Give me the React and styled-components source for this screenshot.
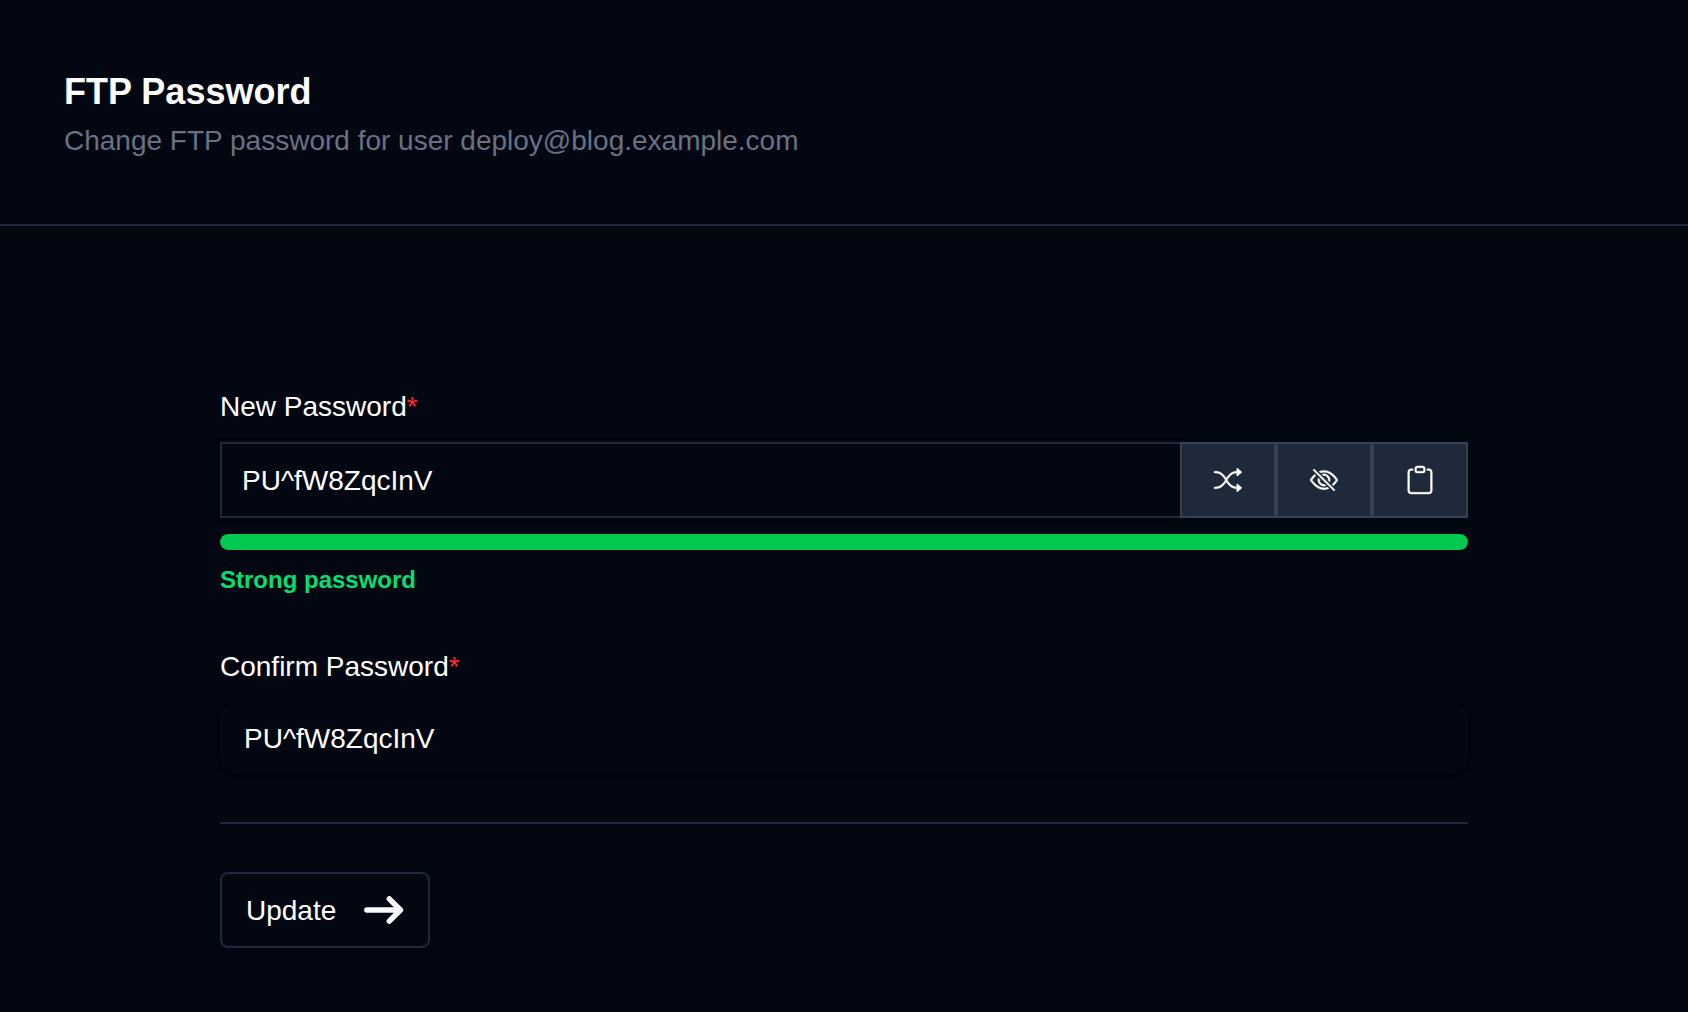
import { useState } from 'react';
import styled, { createGlobalStyle } from 'styled-components';
import { BsShuffle, BsEye, BsEyeSlash, BsClipboard } from 'react-icons/bs';

const GlobalStyle = createGlobalStyle`
  * {
    box-sizing: border-box;
  }

  body {
    margin: 0;
    background-color: #030712;
    color: #fff;
    font-family: 'Liberation Sans', Arial, sans-serif;
    font-size: 28px;
    line-height: 42px;
  }
`;

const StyledHeader = styled.header`
  padding: 64px 64px 62px;
  border-bottom: 2px solid #1e2939;

  h1 {
    margin: 0;
    font-size: 36px;
    line-height: 56px;
    font-weight: 700;
  }

  p {
    margin: 0;
    color: #6a7282;
  }
`;

const StyledForm = styled.form`
  max-width: 1376px;
  margin: 0 auto;
  padding: 160px 64px 64px;
`;

const Field = styled.div`
  display: flex;
  flex-direction: column;
  margin-bottom: 48px;
`;

const Label = styled.label`
  margin-bottom: 14px;

  span {
    color: #fb2c36;
  }
`;

const InputGroup = styled.div`
  display: flex;
`;

const Input = styled.input`
  flex: 1;
  min-width: 0;
  height: ${({ $grouped }) => ($grouped ? '76px' : '72px')};
  padding: ${({ $grouped }) => ($grouped ? '2px 20px 0' : '2px 24px 0')};
  border: ${({ $grouped }) => ($grouped ? '2px solid #1e2939' : '0')};
  border-right: 0;
  border-radius: ${({ $grouped }) => ($grouped ? '0' : '16px')};
  background-color: #030712;
  box-shadow: 0 2px 6px rgba(0, 0, 0, 0.4), 0 2px 4px rgba(0, 0, 0, 0.4);
  color: #fff;
  font-family: inherit;
  font-size: 28px;
  outline: none;
`;

const IconButton = styled.button`
  display: flex;
  align-items: center;
  justify-content: center;
  width: 96px;
  height: 76px;
  padding: 0;
  border: 2px solid #364153;
  background-color: #1e2939;
  color: #fff;
  font-size: 28px;
  cursor: pointer;

  svg {
    stroke: currentColor;
    stroke-width: 0.25;
    overflow: visible;
  }
`;

const StrengthBar = styled.div`
  height: 16px;
  margin-top: 16px;
  border-radius: 8px;
  background-color: #1e2939;
  overflow: hidden;

  div {
    height: 100%;
    border-radius: 8px;
    background-color: #00c951;
  }
`;

const StrengthText = styled.p`
  margin: 12px 0 0;
  color: #05df72;
  font-size: 24px;
  line-height: 36px;
  font-weight: 700;
`;

const Divider = styled.hr`
  margin: 0 0 48px;
  border: 0;
  border-top: 2px solid #1e2939;
`;

const SubmitButton = styled.button`
  display: inline-flex;
  align-items: center;
  gap: 28px;
  height: 76px;
  padding: 0 24px;
  border: 2px solid #1e2939;
  border-radius: 8px;
  background-color: #030712;
  box-shadow: 0 2px 6px rgba(0, 0, 0, 0.4);
  color: #fff;
  font-family: inherit;
  font-size: 28px;
  cursor: pointer;

  span {
    padding-top: 2px;
  }
`;

const ArrowIcon = () => (
  <svg width="40" height="28" viewBox="0 0 40 28" fill="none" stroke="#f9fafb" strokeWidth="5.4" strokeLinecap="round" strokeLinejoin="round" aria-hidden="true">
    <path d="M2.8 14H36M25.3 2.8L36.5 14L25.3 25.2" />
  </svg>
);

const App = () => {
  const [password, setPassword] = useState('PU^fW8ZqcInV');
  const [confirm, setConfirm] = useState('PU^fW8ZqcInV');
  const [visible, setVisible] = useState(true);

  const strength = Math.min(100, Math.round((password.length / 12) * 100));

  const generate = () => {
    const chars = 'ABCDEFGHJKLMNPQRSTUVWXYZabcdefghjkmnpqrstuvwxyz23456789^!#';
    let next = '';
    for (let i = 0; i < 12; i++) {
      next += chars[Math.floor(Math.random() * chars.length)];
    }
    setPassword(next);
    setConfirm(next);
  };

  return (
    <>
      <GlobalStyle />
      <StyledHeader>
        <h1>FTP Password</h1>
        <p>Change FTP password for user deploy@blog.example.com</p>
      </StyledHeader>
      <StyledForm onSubmit={(e) => e.preventDefault()}>
        <Field>
          <Label htmlFor="password">
            New Password<span>*</span>
          </Label>
          <InputGroup>
            <Input
              $grouped
              id="password"
              type={visible ? 'text' : 'password'}
              value={password}
              onChange={(e) => setPassword(e.target.value)}
            />
            <IconButton type="button" aria-label="Generate password" onClick={generate}>
              <BsShuffle />
            </IconButton>
            <IconButton type="button" aria-label="Toggle password" onClick={() => setVisible(!visible)}>
              {visible ? <BsEyeSlash /> : <BsEye />}
            </IconButton>
            <IconButton
              type="button"
              aria-label="Copy password"
              onClick={() => navigator.clipboard.writeText(password)}
            >
              <BsClipboard />
            </IconButton>
          </InputGroup>
          <StrengthBar>
            <div style={{ width: `${strength}%` }} />
          </StrengthBar>
          <StrengthText>{strength > 80 ? 'Strong password' : 'Weak password'}</StrengthText>
        </Field>
        <Field>
          <Label htmlFor="confirm">
            Confirm Password<span>*</span>
          </Label>
          <InputGroup>
            <Input
              id="confirm"
              type={visible ? 'text' : 'password'}
              value={confirm}
              onChange={(e) => setConfirm(e.target.value)}
            />
          </InputGroup>
        </Field>
        <Divider />
        <SubmitButton type="submit">
          <span>Update</span>
          <ArrowIcon />
        </SubmitButton>
      </StyledForm>
    </>
  );
};

export default App;
